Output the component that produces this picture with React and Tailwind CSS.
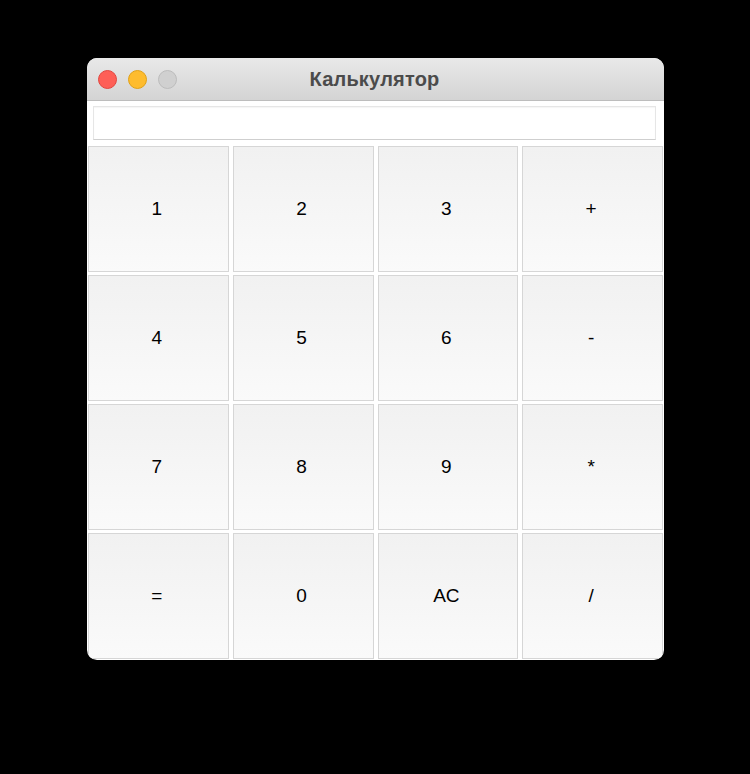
const keys = ["1", "2", "3", "+", "4", "5", "6", "-", "7", "8", "9", "*", "=", "0", "AC", "/"];

const App = () => {
  return (
    <div className="w-[750px] h-[774px] bg-black pt-[58px] pl-[87px] font-['Liberation_Sans',Arial,sans-serif]">
      <div className="w-[577px] h-[602px] rounded-[10px] overflow-hidden bg-white flex flex-col">
        {/* title bar */}
        <div className="relative h-[43px] shrink-0 bg-gradient-to-b from-[#e9e9e9] to-[#d4d4d4] border-b border-[#bdbdbd] flex items-center justify-center">
          <div className="absolute left-[11px] top-[12px] flex gap-[11px]">
            <span className="w-[19px] h-[19px] rounded-full bg-[#fe5f57] border border-[#e2463f]" />
            <span className="w-[19px] h-[19px] rounded-full bg-[#febc2e] border border-[#e1a116]" />
            <span className="w-[19px] h-[19px] rounded-full bg-[#d0d0d0] border border-[#bcbcbc]" />
          </div>
          <span className="text-[20px] font-bold text-[#4b4b4b] tracking-[0.2px] mr-[2px]">
            Калькулятор
          </span>
        </div>

        {/* display */}
        <div className="pt-[5px] pl-[6px] pr-[8px] pb-[6px]">
          <div className="h-[34px] bg-white border border-[#e6e6e6] border-b-[#cfcfcf] shadow-[inset_0_1px_1px_rgba(0,0,0,0.04)]" />
        </div>

        {/* keypad */}
        <div className="px-[1px] grid grid-cols-4 gap-x-[4px] gap-y-[3px] auto-rows-[126px]">
          {keys.map((k) => (
            <button
              key={k}
              className="
                flex items-center justify-center
                border border-[#d6d6d6]
                bg-gradient-to-b from-[#f1f1f1] to-[#fafafa]
                text-[19px] text-black
                pr-[3px]
              "
            >
              {k}
            </button>
          ))}
        </div>
      </div>
    </div>
  );
};

export default App;
